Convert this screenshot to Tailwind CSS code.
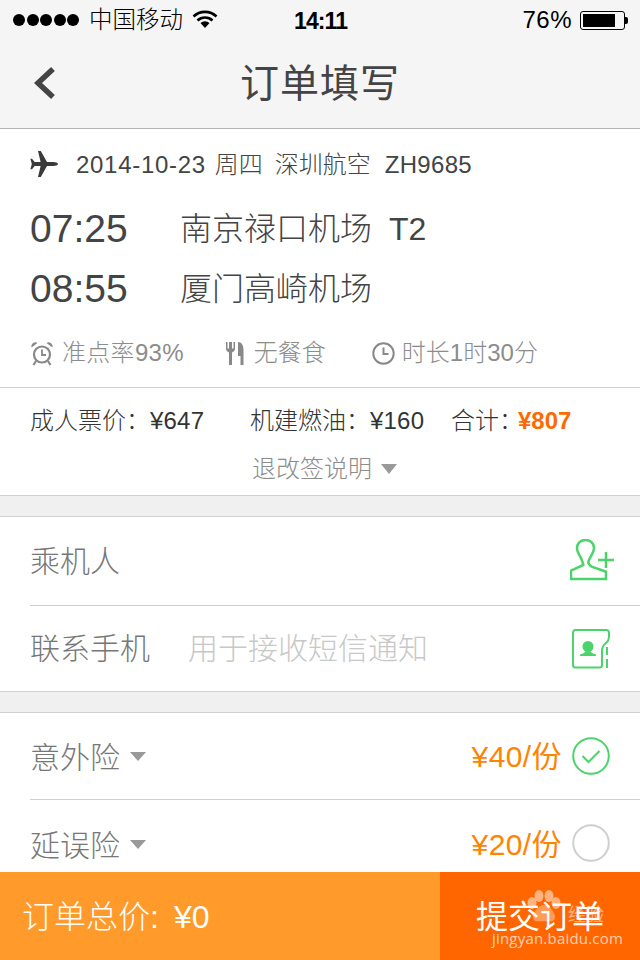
<!DOCTYPE html>
<html lang="zh-CN">
<head>
  <meta charset="UTF-8" />
  <meta name="viewport" content="width=device-width, initial-scale=1.0" />
  <title>订单填写</title>
  <script src="https://cdn.jsdelivr.net/npm/@tailwindcss/browser@4"></script>
</head>
<body class="bg-[#f0f0f0] font-['Liberation_Sans','Noto_Sans_CJK_SC',sans-serif]">
  <div class="relative w-[640px] h-[960px] overflow-hidden">

    <!-- Status bar -->
    <div class="relative h-10 bg-[#f5f5f5] flex items-center pl-[13px] pr-[12px] text-black">
      <div class="flex gap-[1.5px]">
        <span class="w-[12px] h-[12px] rounded-full bg-black"></span>
        <span class="w-[12px] h-[12px] rounded-full bg-black"></span>
        <span class="w-[12px] h-[12px] rounded-full bg-black"></span>
        <span class="w-[12px] h-[12px] rounded-full bg-black"></span>
        <span class="w-[12px] h-[12px] rounded-full bg-black"></span>
      </div>
      <span class="ml-[10px] pt-[2px] text-[23.500px] font-light">中国移动</span>
      <svg class="ml-[9px] mt-[-2px]" width="26" height="20" viewBox="0 0 26 20">
        <path d="M1.500 7.500a16.500 16.500 0 0 1 23 0M5.500 11.500a11 11 0 0 1 15 0" fill="none" stroke="#000" stroke-width="2.600"/>
        <path d="M8.500 14a7 7 0 0 1 9 0L13 19z" fill="#000"/>
      </svg>
      <span class="absolute left-[294px] top-[8px] text-[23px] leading-[26px] font-bold tracking-[-0.900px]">14:11</span>
      <span class="ml-auto text-[24px] tracking-[0.500px]">76%</span>
      <div class="ml-[8px] flex items-center">
        <div class="w-[45px] h-[19px] border border-black rounded-[3px] p-[2px]">
          <div class="w-[32px] h-full bg-black"></div>
        </div>
        <span class="w-[3px] h-[7px] bg-black rounded-r-[2px]"></span>
      </div>
    </div>

    <!-- Navigation bar -->
    <div class="relative h-[89px] bg-[#f5f5f5] border-b border-[#b4b4b4] flex items-center justify-center">
      <svg class="absolute left-[33px] top-[26px]" width="24" height="34" viewBox="0 0 24 34">
        <path d="M20 3L5 17l15 14" fill="none" stroke="#444" stroke-width="5.500"/>
      </svg>
      <h1 class="text-[39px] font-normal text-[#444] tracking-[1px]">订单填写</h1>
    </div>

    <!-- Flight summary -->
    <section class="bg-white border-b border-[#d0d0d0]">
      <div class="h-[70px] pt-[2px] pl-[30px] flex items-center text-[#444] text-[24px] font-light">
        <svg class="mt-[-2px]" width="28" height="26" viewBox="0 0 28 26">
          <path d="M28 13c0-1.200-3-2-5.500-2H17L10.800 0H8l2.600 11H4.700L2 7.800H0.400L1.800 13 0.400 18.200H2L4.700 15h5.900L8 26h2.800L17 15h5.500C25 15 28 14.200 28 13z" fill="#3a3a3a"/>
        </svg>
        <span class="ml-[18px] tracking-[0.700px]">2014-10-23</span>
        <span class="ml-[9px]">周四</span>
        <span class="ml-[12px]">深圳航空</span>
        <span class="ml-[14px] tracking-[0.300px]">ZH9685</span>
      </div>
      <div class="h-[60px] pl-[30px] flex items-center text-[#444]">
        <span class="w-[150px] text-[39px] font-light">07:25</span>
        <span class="text-[32px] font-light">南京禄口机场</span>
        <span class="ml-[17px] text-[32px]">T2</span>
      </div>
      <div class="h-[60px] pl-[30px] flex items-center text-[#444]">
        <span class="w-[150px] text-[39px] font-light">08:55</span>
        <span class="text-[32px] font-light">厦门高崎机场</span>
      </div>
      <div class="h-[68px] pl-[30px] flex items-center text-[24px] text-[#8c8c8c] font-light">
        <svg width="24" height="25" viewBox="0 0 24 25">
          <circle cx="12" cy="13.500" r="8" fill="none" stroke="#888" stroke-width="2.200"/>
          <path d="M12 8.500v5.500h4" fill="none" stroke="#888" stroke-width="1.800"/>
          <path d="M1.500 6.500a4 4 0 0 1 6-4.500zM22.500 6.500a4 4 0 0 0-6-4.500z" fill="#888"/>
          <path d="M6 20l-2.500 4M18 20l2.500 4" stroke="#888" stroke-width="2.200"/>
        </svg>
        <span class="ml-[8px] tracking-[0.300px]">准点率93%</span>
        <svg class="ml-[41px]" width="20" height="23" viewBox="0 0 20 23">
          <path d="M1 0v7c0 2 2 3 3 3.500V23h3V10.500C8 10 10 9 10 7V0H8.500v6.500H7V0H4v6.500H2.500V0z" fill="#888"/>
          <path d="M13 0c3.500 0 5.500 3 5.500 8v15h-3v-9H13z" fill="#888"/>
        </svg>
        <span class="ml-[9px]">无餐食</span>
        <svg class="ml-[46px]" width="23" height="23" viewBox="0 0 23 23">
          <circle cx="11.500" cy="11.500" r="10.200" fill="none" stroke="#888" stroke-width="2"/>
          <path d="M11.500 5.500v6.500h5" fill="none" stroke="#888" stroke-width="2"/>
        </svg>
        <span class="ml-[7px]">时长1时30分</span>
      </div>
    </section>

    <!-- Fare breakdown -->
    <section class="bg-white border-b border-[#d0d0d0]">
      <div class="h-[60px] pt-[6px] pl-[30px] flex items-center text-[24px] text-[#333] whitespace-nowrap">
        <span class="w-[120px] font-light">成人票价：</span>
        <span class="w-[100px] tracking-[0.200px]">¥647</span>
        <span class="w-[120px] font-light">机建燃油：</span>
        <span class="w-[81px] tracking-[0.200px]">¥160</span>
        <span class="w-[67px] font-light">合计：</span>
        <span class="font-bold text-[#ff6a00]">¥807</span>
      </div>
      <div class="h-[47px] pb-[6px] pl-[252px] flex items-center text-[24px] text-[#8c8c8c] font-light">
        <span>退改签说明</span>
        <span class="ml-[9px] w-0 h-0 border-x-[8px] border-x-transparent border-t-[10px] border-t-[#999]"></span>
      </div>
    </section>

    <!-- Passenger and contact -->
    <section class="mt-5 bg-white border-y border-[#d0d0d0]">
      <div class="ml-[30px] h-[89px] pr-[24px] flex items-center justify-between border-b border-[#d0d0d0]">
        <span class="text-[30px] text-[#777] font-light">乘机人</span>
        <svg class="mt-[-2px]" width="46" height="42" viewBox="0 0 46 42">
          <path d="M1 40v-8.300L13.300 26c-.5-3-1.600-5-3-8.300C8 14 7 12 7 9c0-5 4-8 8.500-8S24 4 24 9c0 5-5 10-5.700 13.700-.3 2 1.700 3.800 3.400 5L36 32.700V40z" fill="none" stroke="#4cd36b" stroke-width="2.500"/>
          <path d="M28 21h16M36 13v16" fill="none" stroke="#4cd36b" stroke-width="2.500"/>
        </svg>
      </div>
      <div class="ml-[30px] h-[85px] pr-[30px] flex items-center">
        <span class="w-[158px] text-[30px] text-[#777] font-light">联系手机</span>
        <span class="text-[30px] text-[#c8c8c8] font-light">用于接收短信通知</span>
        <svg class="ml-auto" width="38" height="40" viewBox="0 0 38 40">
          <path d="M30 22v14a2.500 2.500 0 0 1-2.500 2.500H3.500A2.500 2.500 0 0 1 1 36V3.500A2.500 2.500 0 0 1 3.500 1h31A2.500 2.500 0 0 1 37 3.500V8c0 4-2 5-4 7-2 1.500-3 3.500-3 7z" fill="none" stroke="#4cd36b" stroke-width="2"/>
          <path d="M35 18v8M35 30v9" stroke="#4cd36b" stroke-width="2"/>
          <circle cx="16" cy="17.500" r="5.500" fill="#4cd36b"/>
          <path d="M8 27v-1.500c3-1 5-1.500 5-3h6c0 1.500 2 2 5 3V27z" fill="#4cd36b"/>
        </svg>
      </div>
    </section>

    <!-- Insurance options -->
    <section class="mt-5 bg-white border-t border-[#d0d0d0]">
      <div class="ml-[30px] h-[87px] pr-[30px] flex items-center border-b border-[#d0d0d0]">
        <span class="pt-[2px] text-[30px] text-[#777] font-light">意外险</span>
        <span class="ml-[10px] w-0 h-0 border-x-[8px] border-x-transparent border-t-[9px] border-t-[#999]"></span>
        <span class="ml-auto text-[30px] text-[#ff8400] tracking-[0.400px]">¥40/份</span>
        <svg class="ml-[10px]" width="38" height="38" viewBox="0 0 38 38">
          <circle cx="19" cy="19" r="17.800" fill="none" stroke="#4cd36b" stroke-width="2"/>
          <path d="M10.500 19l6 6 11-11" fill="none" stroke="#4cd36b" stroke-width="2"/>
        </svg>
      </div>
      <div class="ml-[30px] h-[88px] pr-[30px] flex items-center">
        <span class="pt-[2px] text-[30px] text-[#777] font-light">延误险</span>
        <span class="ml-[10px] w-0 h-0 border-x-[8px] border-x-transparent border-t-[9px] border-t-[#999]"></span>
        <span class="ml-auto text-[30px] text-[#ff8400] tracking-[0.400px]">¥20/份</span>
        <svg class="ml-[10px] mt-[-2px]" width="38" height="38" viewBox="0 0 38 38">
          <circle cx="19" cy="19" r="17.800" fill="none" stroke="#cfcfcf" stroke-width="2"/>
        </svg>
      </div>
    </section>

    <!-- Fixed bottom bar -->
    <div class="absolute left-0 right-0 bottom-0 h-[88px] flex text-white">
      <div class="flex-1 bg-[#ff9a2b] pl-[22px] pt-[2px] flex items-center text-[32px] font-light whitespace-nowrap">
        <span>订单总价:</span><span class="ml-[15px]">¥0</span>
      </div>
      <div class="w-[200px] bg-[#ff6600] pt-[2px] flex items-center justify-center text-[32px]">提交订单</div>
    </div>

    <!-- Site watermark over the button -->
    <div class="absolute left-[490px] top-[888px] w-[120px] h-[60px] text-white/70">
      <svg class="absolute left-[34px] top-[2px]" width="38" height="34" viewBox="0 0 38 34">
        <ellipse cx="8" cy="13" rx="4.500" ry="6" fill="#fff" fill-opacity=".5"/>
        <ellipse cx="15" cy="6" rx="4.500" ry="6" fill="#fff" fill-opacity=".5"/>
        <ellipse cx="25" cy="6" rx="4.500" ry="6" fill="#fff" fill-opacity=".5"/>
        <ellipse cx="32" cy="13" rx="4.500" ry="6" fill="#fff" fill-opacity=".5"/>
        <path d="M20 15c6 0 11 8 11 12 0 6-7 4-11 4s-11 2-11-4c0-4 5-12 11-12z" fill="#fff" fill-opacity=".35"/>
      </svg>
      <span class="absolute left-[78px] top-[14px] text-[18px] text-white/50">经验</span>
      <span class="absolute left-[2px] top-[41px] text-[15px] leading-[18px] tracking-[0.200px] font-['Open_Sans',sans-serif]">jingyan.baidu.com</span>
    </div>
  </div>
</body>
</html>
